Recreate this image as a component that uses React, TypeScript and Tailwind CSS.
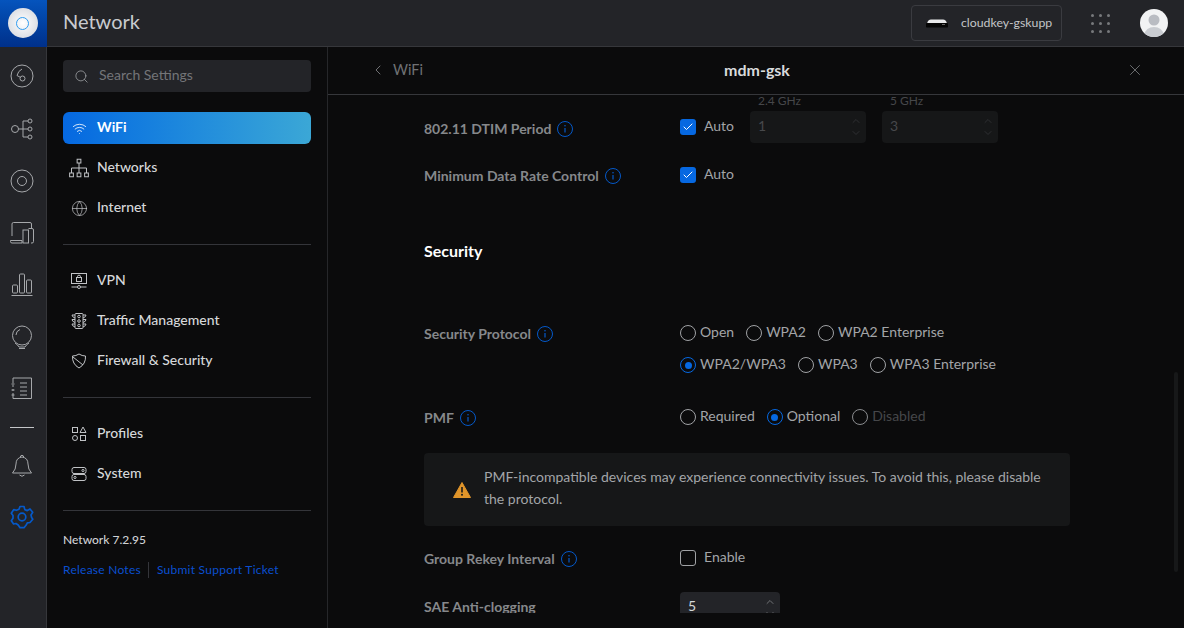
import type { ReactNode } from 'react';
import { ChevronLeft, ChevronUp, ChevronDown, Globe, Search, Wifi, X, Check } from 'lucide-react';

function RailIcon({ children, active }: { children: ReactNode; active?: boolean }) {
  return (
    <svg viewBox="0 0 24 24" fill="none" stroke="currentColor" strokeWidth="1" className={`size-6 ${active ? 'text-[#0559c9]' : 'text-[#a6a8ab]'}`}>
      {children}
    </svg>
  );
}

function NavIcon({ children, large }: { children: ReactNode; large?: boolean }) {
  return (
    <svg viewBox="0 0 16 16" fill="none" stroke="currentColor" strokeWidth={large ? 0.8 : 1} className={`text-[#c0c2c5] ${large ? 'size-5' : 'size-4'}`}>
      {children}
    </svg>
  );
}

function Info() {
  return (
    <svg viewBox="0 0 16 16" fill="none" className="size-4 shrink-0 text-[#0559c9]">
      <circle cx="8" cy="8" r="7.5" stroke="currentColor" />
      <path d="M8 7v4.5" stroke="currentColor" strokeWidth="1.2" />
      <circle cx="8" cy="4.7" r="0.8" fill="currentColor" />
    </svg>
  );
}

function NavItem({ icon, label, active }: { icon: ReactNode; label: string; active?: boolean }) {
  return (
    <div className={`flex h-8 items-center rounded-md text-sm ${active ? 'bg-linear-to-r from-[#0668e1] to-[#3ba7d6] font-bold text-white' : 'font-medium text-[#d6d8da]'}`}>
      <span className="flex w-[34px] justify-center pr-[2px]">{icon}</span>
      <span className="relative -top-px">{label}</span>
    </div>
  );
}

function Divider() {
  return <div className="h-px bg-[#34353a]" />;
}

function Row({ label, labelTop, top, height, children }: { label: string; labelTop: string; top: string; height?: string; children: ReactNode }) {
  return (
    <div className={`flex items-start pl-[96px] ${height ?? ''}`}>
      <div className={`flex w-[256px] items-center gap-[6px] text-sm leading-5 font-bold text-[#86888b] ${labelTop}`}>
        {label}
        {label !== 'SAE Anti-clogging' && <Info />}
      </div>
      <div className={top}>{children}</div>
    </div>
  );
}

function Checkbox({ label, checked }: { label: string; checked?: boolean }) {
  return (
    <div className="flex items-center gap-2 text-sm leading-4 text-[#a3a5a8]">
      {checked ? (
        <span className="flex size-4 items-center justify-center rounded-[3px] bg-[#0668e1]">
          <Check className="size-3 text-white" strokeWidth={2} />
        </span>
      ) : (
        <span className="size-4 rounded-[3px] border border-[#a0a2a5]" />
      )}
      <span className="relative -top-px">{label}</span>
    </div>
  );
}

function Radio({ label, checked, disabled }: { label: string; checked?: boolean; disabled?: boolean }) {
  return (
    <div className={`mr-3 flex h-4 items-center gap-1 text-sm ${disabled ? 'text-[#46474a]' : 'text-[#a3a5a8]'}`}>
      <span className={`flex size-4 items-center justify-center rounded-full border ${checked ? 'border-[#0668e1]' : disabled ? 'border-[#8a8c8f]' : 'border-[#a0a2a5]'}`}>
        {checked && <span className="size-[7px] rounded-full bg-[#0668e1]" />}
      </span>
      <span className="relative -top-px">{label}</span>
    </div>
  );
}

function NumberField({ value, band }: { value: string; band: string }) {
  return (
    <div className="w-[116px]">
      <div className="h-3 pl-2 text-xs leading-3 text-[#46474a]">{band}</div>
      <div className="mt-1 flex h-8 items-center justify-between rounded bg-[#161718] pr-1 pl-2 text-sm text-[#47484b]">
        <span className="relative -top-px">{value}</span>
        <span className="flex flex-col text-[#2e2f32]">
          <ChevronUp className="size-3" />
          <ChevronDown className="size-3" />
        </span>
      </div>
    </div>
  );
}

export default function App() {
  return (
    <div className="flex h-screen flex-col overflow-hidden bg-[#0b0b0c] font-[Lato,sans-serif]">
      <header className="flex h-[47px] shrink-0 items-center border-b border-[#36373b] bg-[#232428]">
        <div className="flex h-[47px] w-[47px] shrink-0 items-center justify-center bg-linear-to-b from-[#0554bd] to-[#00308a] pr-[2px]">
          <div className="flex size-[30px] items-center justify-center rounded-full bg-radial from-white to-[#cfd3da]">
            <div className="size-[13px] rounded-full border-[1.5px] border-[#2f9cf0]" />
          </div>
        </div>
        <div className="relative -top-[2px] ml-4 text-xl text-[#c9cbcf]">Network</div>
        <div className="mr-4 ml-auto flex items-center">
          <div className="flex h-9 w-[151px] items-center rounded border border-[#3a3b40] pl-[13px] text-[12.3px] text-[#c4c6c9]">
            <svg viewBox="0 0 24 9" className="h-[9px] w-6">
              <path d="M2 4.5Q3 0.5 6 0.5H18Q21 0.5 22 4.5Z" fill="#e8e9ea" />
              <rect x="1" y="4" width="22" height="4.5" rx="0.8" fill="#050505" />
              <rect x="17" y="5" width="3" height="1" fill="#666" />
            </svg>
            <span className="ml-3">cloudkey-gskupp</span>
          </div>
          <div className="ml-[29px] grid grid-cols-3 gap-x-[5px] gap-y-[5px]">
            {Array.from({ length: 9 }).map((_, i) => (
              <span key={i} className="size-[3px] rounded-full bg-[#77797c]" />
            ))}
          </div>
          <div className="ml-[30px] size-7 overflow-hidden rounded-full bg-[#f2f3f4]">
            <svg viewBox="0 0 28 28" className="size-7">
              <circle cx="14" cy="11" r="5.5" fill="#b9bcc2" />
              <path d="M4 26Q6 18 14 18T24 26V28H4Z" fill="#c9ccd1" />
            </svg>
          </div>
        </div>
      </header>

      <div className="flex min-h-0 flex-1">
        <aside className="flex w-[47px] shrink-0 flex-col items-center border-r border-[#36373b] bg-[#232428] pt-[17px] pr-[2px]">
          <div className="flex flex-col items-center gap-[28px]">
            <RailIcon>
              <circle cx="12" cy="12" r="11" />
              <circle cx="12.5" cy="14.5" r="2.5" />
              <path d="M10.3 13.3 7 11.5Q8 7 12 5" />
            </RailIcon>
            <div className="relative top-px">
              <RailIcon>
                <circle cx="5" cy="12" r="3.5" />
                <circle cx="20" cy="4" r="2" />
                <circle cx="20" cy="12" r="2" />
                <circle cx="20" cy="20" r="2" />
                <path d="M8.5 12H18M13 4H18M13 20H18M13 4V20" />
              </RailIcon>
            </div>
            <div className="relative top-px">
              <RailIcon>
                <circle cx="12" cy="12" r="11" />
                <circle cx="12" cy="12" r="4.5" />
              </RailIcon>
            </div>
            <div className="relative top-px">
              <RailIcon>
                <path d="M2 15V3Q2 1.5 3.5 1.5H20Q21.5 1.5 21.5 3V7" />
                <path d="M0.5 19.5H12V22H2Q0.5 22 0.5 20.5Z" />
                <rect x="13" y="9" width="5.5" height="13" />
                <path d="M18.5 7.5H22Q23.5 7.5 23.5 9V20.5Q23.5 22 22 22H21" />
              </RailIcon>
            </div>
            <RailIcon>
              <rect x="2.5" y="13" width="5" height="8" rx="1" />
              <rect x="9.5" y="2" width="5" height="19" rx="1" />
              <rect x="16.5" y="8" width="5" height="13" rx="1" />
              <path d="M1.5 23.5H22.5" />
            </RailIcon>
            <div className="relative top-px">
              <RailIcon>
                <circle cx="12" cy="10.5" r="9.5" />
                <path d="M5 18Q8 20 9 22H15Q16 20 19 18M9 23.5H15M6 10Q6 6 10 4.5" />
              </RailIcon>
            </div>
            <RailIcon>
              <path d="M3 2H21.5V22.5H3V17M3 15V13M3 11V9M3 7V2" />
              <path d="M1.5 8H4.5M1.5 14H4.5M1.5 19H4.5M10 7H17M10 11H17M10 15H17M10 19H17" />
            </RailIcon>
          </div>
          <div className="mt-[27px] h-px w-6 bg-[#c4c6c9]" />
          <div className="mt-[26px]">
            <RailIcon>
              <path d="M2.5 19Q6 15.5 6 10Q6 3.8 12 3Q18 3.8 18 10Q18 15.5 21.5 19Z" />
              <path d="M10.5 3.2V2Q12 0.5 13.5 2V3.2M9.5 21Q12 23.5 14.5 21" />
            </RailIcon>
          </div>
          <svg viewBox="0 0 24 24" fill="none" stroke="#0559c9" strokeWidth="1.7" strokeLinejoin="round" className="mt-[27px] size-6">
            <circle cx="12" cy="12" r="3.8" />
            <path d="M10 1.5H14L14.8 4.6 17.3 5.6 20 4 22.7 7.3 21 10 21.6 12.5 22.8 14.3 20 17.5 17.5 17.8 16 20.2 14 22.7H10L8.2 20 6 18.5 3.6 19 1.3 15.7 3 13.2 3 10.6 1.3 8.2 3.8 4.6 6.5 5.3 9 4.3Z" />
          </svg>
        </aside>

        <nav className="flex w-[281px] shrink-0 flex-col border-r border-[#26272a] bg-[#0b0b0c] px-4 pt-[13px]">
          <div className="flex h-8 items-center gap-[10px] rounded bg-[#232428] pl-[11px] text-sm text-[#737578]">
            <Search className="size-[15px] text-[#a6a8ab]" strokeWidth={1.2} />
            <span className="relative -top-px">Search Settings</span>
          </div>
          <div className="mt-5 flex flex-col gap-2">
            <NavItem label="WiFi" active icon={<Wifi className="size-[15px] text-white" strokeWidth={1.3} />} />
            <NavItem
              label="Networks"
              icon={
                <NavIcon large>
                  <rect x="6.5" y="1" width="3" height="3" />
                  <rect x="0.5" y="12" width="3" height="3" />
                  <rect x="6.5" y="12" width="3" height="3" />
                  <rect x="12.5" y="12" width="3" height="3" />
                  <path d="M8 4V12M2 12V8H14V12" />
                </NavIcon>
              }
            />
            <NavItem label="Internet" icon={<Globe className="size-[17px] text-[#c0c2c5]" strokeWidth={1} />} />
          </div>
          <div className="mt-5">
            <Divider />
          </div>
          <div className="mt-5 flex flex-col gap-2">
            <NavItem
              label="VPN"
              icon={
                <NavIcon>
                  <rect x="0.5" y="0.5" width="15" height="10" />
                  <rect x="5.5" y="4.5" width="5" height="4" />
                  <path d="M6.5 4.5V3.5Q6.5 2.2 8 2.2T9.5 3.5V4.5M0.5 14H6.5M9.5 14H15.5" />
                  <circle cx="8" cy="14" r="1.5" />
                </NavIcon>
              }
            />
            <NavItem
              label="Traffic Management"
              icon={
                <NavIcon>
                  <rect x="4" y="0.5" width="8" height="15" rx="1" />
                  <circle cx="8" cy="3.5" r="1.3" />
                  <circle cx="8" cy="8" r="1.3" />
                  <circle cx="8" cy="12.5" r="1.3" />
                  <path d="M4 2H1Q1 4 4 5M12 2H15Q15 4 12 5M4 6.5H1Q1 8.5 4 9.5M12 6.5H15Q15 8.5 12 9.5M4 11H1Q1 13 4 14M12 11H15Q15 13 12 14" />
                </NavIcon>
              }
            />
            <NavItem
              label="Firewall & Security"
              icon={
                <NavIcon>
                  <path d="M1.5 3Q5 3 8 1Q11 3 14.5 3Q15 11 8 15Q1 11 1.5 3Z" />
                  <path d="M2 4L12 12" />
                </NavIcon>
              }
            />
          </div>
          <div className="mt-5">
            <Divider />
          </div>
          <div className="mt-5 flex flex-col gap-2">
            <NavItem
              label="Profiles"
              icon={
                <NavIcon>
                  <rect x="1.5" y="1.5" width="5" height="5" />
                  <path d="M12 1L15 6.5H9Z" />
                  <circle cx="4" cy="12" r="2.5" />
                  <rect x="9.5" y="9.5" width="5" height="5" />
                </NavIcon>
              }
            />
            <NavItem
              label="System"
              icon={
                <NavIcon>
                  <rect x="1" y="1.5" width="14" height="6" rx="2" />
                  <rect x="1" y="8.5" width="14" height="6" rx="2" />
                  <circle cx="12" cy="4.5" r="1.1" />
                  <circle cx="4" cy="11.5" r="1.1" />
                  <path d="M2 7.5L14 8.5" />
                </NavIcon>
              }
            />
          </div>
          <div className="mt-5">
            <Divider />
          </div>
          <div className="mt-[21px] text-xs leading-4 font-medium text-[#d0d2d5]">Network 7.2.95</div>
          <div className="mt-[14px] flex items-center text-xs leading-4 tracking-[0.25px] text-[#0a4fd0]">
            <span>Release Notes</span>
            <span className="mr-2 ml-[7px] h-4 w-px bg-[#34353a]" />
            <span>Submit Support Ticket</span>
          </div>
        </nav>

        <main className="relative flex min-w-0 flex-1 flex-col">
          <div className="relative flex h-[48px] shrink-0 items-center justify-center border-b border-[#36373b] pb-[2px]">
            <div className="absolute left-[42px] flex items-center gap-[7px] text-[14.5px] text-[#6f7174]">
              <ChevronLeft className="size-4 text-[#8a8c8f]" strokeWidth={1.2} />
              WiFi
            </div>
            <div className="relative left-[1px] text-base font-bold text-[#d8dadc]">mdm-gsk</div>
            <X className="absolute right-[40px] size-[18px] text-[#8a8c8f]" strokeWidth={1} />
          </div>

          <div className="h-[518px] overflow-hidden">
            <Row label="802.11 DTIM Period" labelTop="pt-[24px]" top="flex items-center" height="h-[48px]">
              <div className="mt-4 w-[70px]">
                <Checkbox label="Auto" checked />
              </div>
              <div className="flex gap-4">
                <NumberField band="2.4 GHz" value="1" />
                <NumberField band="5 GHz" value="3" />
              </div>
            </Row>
            <Row label="Minimum Data Rate Control" labelTop="pt-[23px]" top="pt-[24px]" height="h-[43px]">
              <Checkbox label="Auto" checked />
            </Row>
            <div className="mt-[53px] pl-[96px] text-base leading-6 font-bold text-white">Security</div>
            <Row label="Security Protocol" labelTop="pt-[61px]" top="pt-[62px]" height="h-[110px]">
              <div className="flex">
                <Radio label="Open" />
                <Radio label="WPA2" />
                <Radio label="WPA2 Enterprise" />
              </div>
              <div className="mt-4 flex">
                <Radio label="WPA2/WPA3" checked />
                <Radio label="WPA3" />
                <Radio label="WPA3 Enterprise" />
              </div>
            </Row>
            <Row label="PMF" labelTop="pt-[35px]" top="pt-[36px]" height="h-[80px]">
              <div className="flex">
                <Radio label="Required" />
                <Radio label="Optional" checked />
                <Radio label="Disabled" disabled />
              </div>
            </Row>
            <div className="ml-[96px] flex h-[73px] w-[646px] items-center rounded bg-[#161718] pr-5 pl-[29px] text-sm leading-[22px] text-[#a3a5a8]">
              <svg viewBox="0 0 18 16" className="mr-[13px] h-[16px] w-[18px] shrink-0">
                <path d="M9 0.5 17.5 15.5H0.5Z" fill="#e0952a" stroke="#e0952a" strokeLinejoin="round" />
                <path d="M9 5V10.5" stroke="#1a1a1a" strokeWidth="1.6" />
                <circle cx="9" cy="12.8" r="1" fill="#1a1a1a" />
              </svg>
              <span className="pb-1">PMF-incompatible devices may experience connectivity issues. To avoid this, please disable the protocol.</span>
            </div>
            <Row label="Group Rekey Interval" labelTop="pt-[23px]" top="pt-[24px]" height="h-[56px]">
              <Checkbox label="Enable" />
            </Row>
            <Row label="SAE Anti-clogging" labelTop="pt-[15px]" top="pt-[10px]">
              <div className="flex h-8 w-[100px] items-start justify-between rounded bg-[#232428] pt-1 pr-1 pl-2 text-sm text-[#d6d8da]">
                5
                <span className="flex flex-col text-[#6f7174]">
                  <ChevronUp className="size-3" />
                  <ChevronDown className="size-3" />
                </span>
              </div>
            </Row>
          </div>
          <div className="absolute top-[325px] right-[6px] h-[200px] w-[4px] rounded-full bg-[#171819]" />
        </main>
      </div>
    </div>
  );
}
